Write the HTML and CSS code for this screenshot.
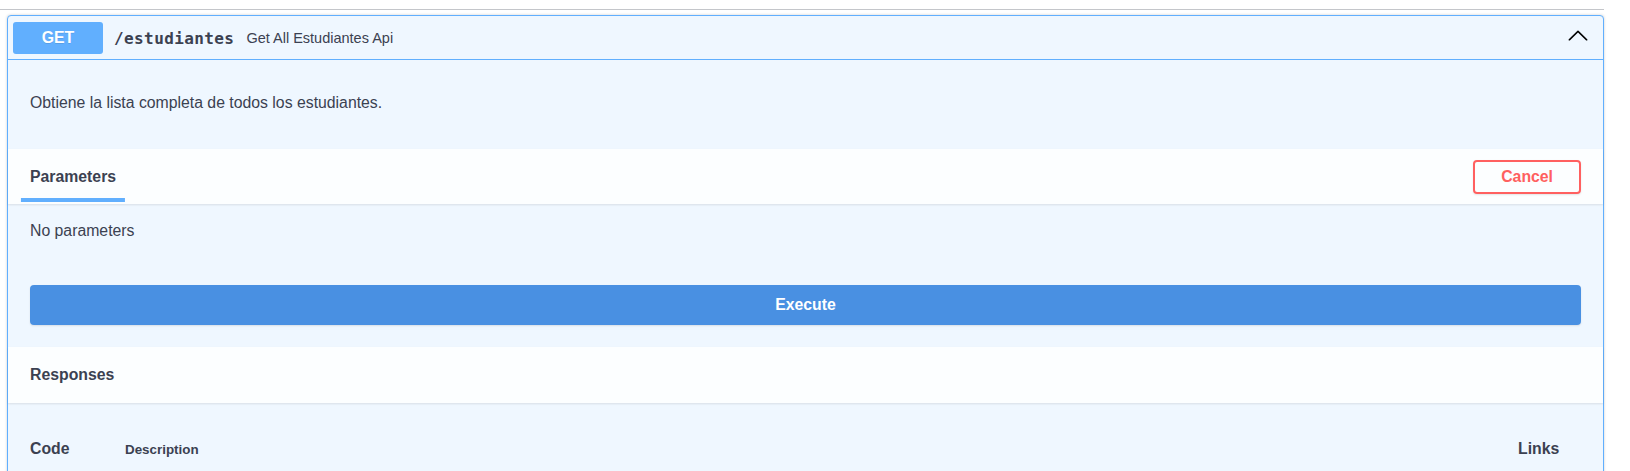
FILE: index.html
```html
<!DOCTYPE html>
<html lang="es">
<head>
<meta charset="utf-8">
<title>GET /estudiantes</title>
<link rel="stylesheet" href="styles.css">
</head>
<body>
<div class="tag-line"></div>
<div class="opblock">
  <div class="summary">
    <span class="method">GET</span>
    <span class="path">/estudiantes</span>
    <span class="summary-desc">Get All Estudiantes Api</span>
    <svg class="arrow" viewBox="0 0 20 20" width="22" height="22" aria-hidden="true"><path d="M17.418 14.908c.272.268.709.268.979 0s.27-.701 0-.969l-7.908-7.83a.697.697 0 0 0-.979 0l-7.908 7.83c-.27.268-.27.701 0 .969.271.268.709.268.979 0L10 7.717l7.418 7.191z"/></svg>
  </div>
  <div class="op-desc"><p>Obtiene la lista completa de todos los estudiantes.</p></div>
  <div class="section-header">
    <div class="tab"><span class="tab-label">Parameters</span></div>
    <button class="btn-cancel" type="button">Cancel</button>
  </div>
  <div class="params-body"><p>No parameters</p></div>
  <div class="execute-wrapper"><button class="btn-execute" type="button">Execute</button></div>
  <div class="section-header responses-header"><h4>Responses</h4></div>
  <div class="responses-inner">
    <div class="responses-head">
      <span class="col-code">Code</span>
      <span class="col-desc">Description</span>
      <span class="col-links">Links</span>
    </div>
  </div>
</div>
</body>
</html>
```

FILE: styles.css
```css
html, body {
  margin: 0;
  padding: 0;
  background: #ffffff;
}
body {
  font-family: "Liberation Sans", Arial, sans-serif;
  color: #3b4151;
  overflow: hidden;
}
.tag-line {
  width: 1604px;
  height: 9px;
  border-bottom: 1px solid rgba(59, 65, 81, 0.3);
}
.opblock {
  margin: 5px 26px 0 7px;
  border: 1px solid #61affe;
  border-radius: 4px;
  background: #eff7ff;
  box-shadow: 0 0 3px rgba(0, 0, 0, 0.19);
}
.summary {
  display: flex;
  align-items: center;
  padding: 6px 5px 5px 5px;
  border-bottom: 1px solid #61affe;
}
.method {
  display: flex;
  align-items: center;
  justify-content: center;
  width: 90px;
  height: 32px;
  border-radius: 3px;
  background: #61affe;
  color: #ffffff;
  font-weight: 700;
  font-size: 15.8px;
  text-shadow: 0 1px 0 rgba(0, 0, 0, 0.1);
}
.path {
  padding: 0 12px 0 11px;
  font-family: "DejaVu Sans Mono", "Liberation Mono", monospace;
  font-weight: 700;
  font-size: 16px;
  letter-spacing: 0.4px;
  color: #3b4151;
}
.summary-desc {
  flex: 1 1 auto;
  font-size: 14.5px;
  color: #3b4151;
}
.arrow {
  margin: 0 9px 7px 0;
  fill: #000000;
}
.op-desc {
  padding: 34px 22px 37px 22px;
}
.op-desc p,
.params-body p {
  margin: 0;
  font-size: 15.8px;
  line-height: 18px;
}
.section-header {
  display: flex;
  align-items: center;
  justify-content: space-between;
  min-height: 55px;
  box-sizing: border-box;
  padding: 8px 22px;
  background: rgba(255, 255, 255, 0.8);
  box-shadow: 0 1px 2px rgba(0, 0, 0, 0.1);
}
.tab-label {
  position: relative;
  display: inline-block;
  font-weight: 700;
  font-size: 15.8px;
  line-height: 18px;
}
.tab-label::after {
  content: "";
  position: absolute;
  left: 50%;
  bottom: -16px;
  width: 121%;
  height: 4px;
  transform: translateX(-50%);
  background: #61affe;
}
.btn-cancel {
  font-family: "Liberation Sans", Arial, sans-serif;
  font-weight: 700;
  font-size: 15.8px;
  line-height: 18px;
  color: #ff6060;
  background: transparent;
  border: 2px solid #ff6060;
  border-radius: 4px;
  padding: 6px 26px;
  margin-top: 1px;
  box-shadow: 0 1px 2px rgba(0, 0, 0, 0.1);
}
.params-body {
  padding: 18px 22px 0 22px;
}
.execute-wrapper {
  padding: 45px 22px 22px 22px;
}
.btn-execute {
  display: block;
  width: 100%;
  height: 40px;
  border: 0;
  border-radius: 4px;
  background: #4990e2;
  color: #ffffff;
  font-family: "Liberation Sans", Arial, sans-serif;
  font-weight: 700;
  font-size: 15.8px;
  box-shadow: 0 1px 2px rgba(0, 0, 0, 0.1);
}
.responses-header {
  padding-top: 0;
  padding-bottom: 0;
  min-height: 56px;
}
.responses-header h4 {
  margin: 0;
  font-size: 15.8px;
  font-weight: 700;
  line-height: 18px;
}
.responses-inner {
  padding: 37px 22px 20px 22px;
}
.responses-head {
  display: grid;
  grid-template-columns: 95px 1fr 63px;
  align-items: baseline;
  font-weight: 700;
}
.col-code,
.col-links {
  font-size: 15.8px;
  line-height: 18px;
}
.col-desc {
  font-size: 13.4px;
}
```
